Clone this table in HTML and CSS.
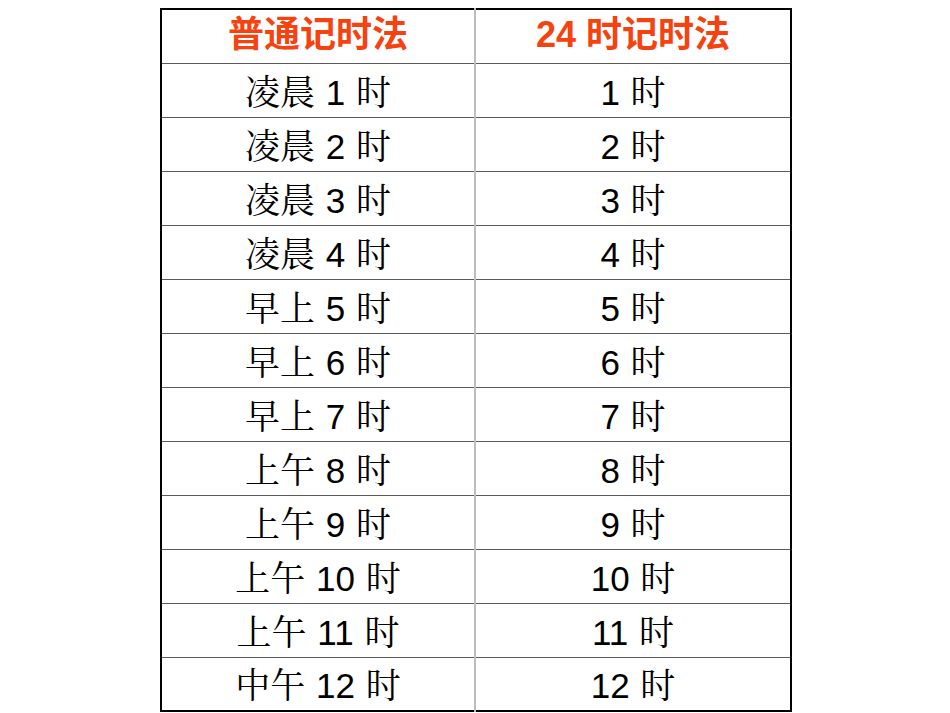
FILE: index.html
```html
<!DOCTYPE html>
<html lang="zh-CN">
<head>
<meta charset="utf-8">
<title>24 时记时法</title>
<link rel="stylesheet" href="styles.css">
</head>
<body>
<table class="time-table">
  <thead>
    <tr class="head-row">
      <th class="cell cell-left">普通记时法</th>
      <th class="cell cell-right">24 时记时法</th>
    </tr>
  </thead>
  <tbody>
    <tr class="row"><td class="cell cell-left">凌晨 1 时</td><td class="cell cell-right">1 时</td></tr>
    <tr class="row"><td class="cell cell-left">凌晨 2 时</td><td class="cell cell-right">2 时</td></tr>
    <tr class="row"><td class="cell cell-left">凌晨 3 时</td><td class="cell cell-right">3 时</td></tr>
    <tr class="row"><td class="cell cell-left">凌晨 4 时</td><td class="cell cell-right">4 时</td></tr>
    <tr class="row"><td class="cell cell-left">早上 5 时</td><td class="cell cell-right">5 时</td></tr>
    <tr class="row"><td class="cell cell-left">早上 6 时</td><td class="cell cell-right">6 时</td></tr>
    <tr class="row"><td class="cell cell-left">早上 7 时</td><td class="cell cell-right">7 时</td></tr>
    <tr class="row"><td class="cell cell-left">上午 8 时</td><td class="cell cell-right">8 时</td></tr>
    <tr class="row"><td class="cell cell-left">上午 9 时</td><td class="cell cell-right">9 时</td></tr>
    <tr class="row"><td class="cell cell-left">上午 10 时</td><td class="cell cell-right">10 时</td></tr>
    <tr class="row"><td class="cell cell-left">上午 11 时</td><td class="cell cell-right">11 时</td></tr>
    <tr class="row"><td class="cell cell-left">中午 12 时</td><td class="cell cell-right">12 时</td></tr>
  </tbody>
</table>
</body>
</html>
```

FILE: styles.css
```css
html, body {
  margin: 0;
  padding: 0;
  background: #ffffff;
}

body {
  padding-top: 8px;
  padding-left: 160px;
}

.time-table {
  border-collapse: collapse;
  width: 632px;
  table-layout: fixed;
  border: 2px solid #000000;
  font-family: "Liberation Sans", "Noto Serif CJK SC", "Noto Sans CJK SC", sans-serif;
  color: #000000;
}

.cell {
  padding: 0;
  text-align: center;
  vertical-align: middle;
  border-top: 1px solid #5a5a5a;
  border-bottom: 1px solid #5a5a5a;
  white-space: nowrap;
}

.cell-left {
  width: 314px;
  border-right: 2px solid #bdbdbd;
}

.cell-right {
  width: 316px;
}

.head-row .cell {
  height: 54px;
  font-family: "Liberation Sans", "Noto Sans CJK SC", sans-serif;
  font-weight: bold;
  font-size: 36px;
  color: #f5420f;
  line-height: 1;
  padding-bottom: 2px;
  box-sizing: border-box;
}

.row .cell {
  height: 54px;
  font-size: 35px;
  word-spacing: 1px;
  line-height: 1;
  padding-top: 4px;
  box-sizing: border-box;
}
```
